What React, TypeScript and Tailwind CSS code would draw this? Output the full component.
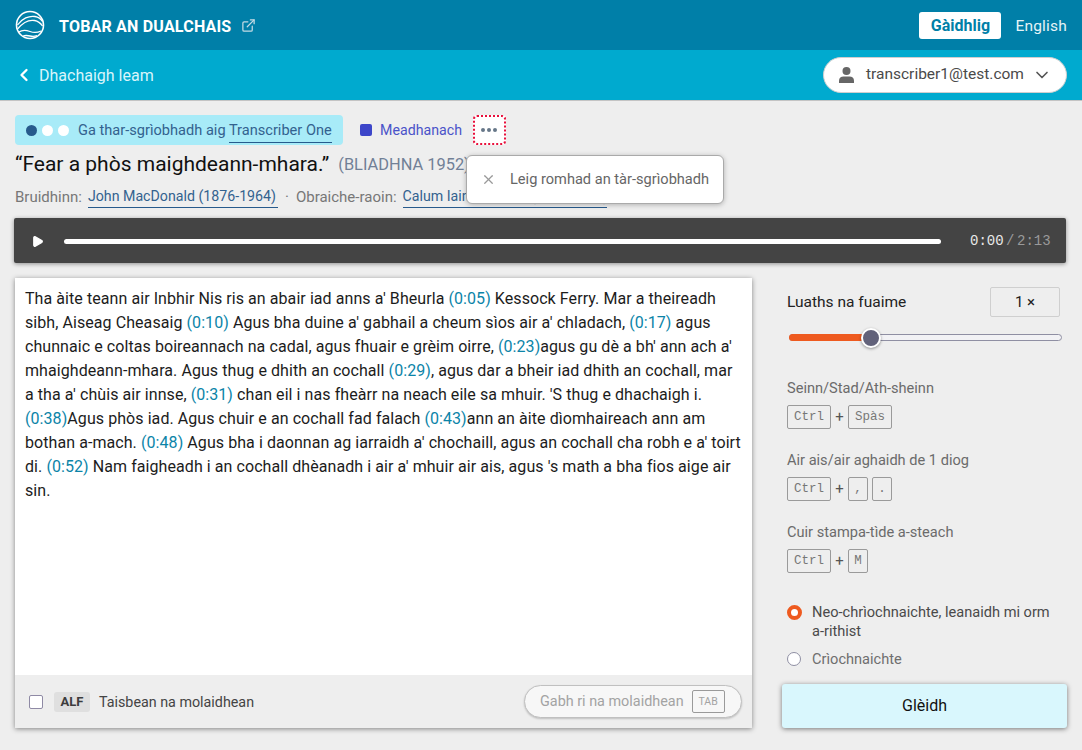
import React from "react";
import { ChevronDown, ChevronLeft, ExternalLink, Play, X } from "lucide-react";

const Stamp = ({ children }: { children: React.ReactNode }) => (
  <span className="text-[#0b84a8]">{children}</span>
);

const Key = ({ children, wide }: { children: React.ReactNode; wide?: boolean }) => (
  <span
    className={`flex h-[24px] items-center justify-center rounded-[2px] border border-[#9a9a9a] font-['Liberation_Mono',monospace] text-[12.5px] text-[#777] ${
      wide ? "w-[44px]" : "w-[20px]"
    }`}
  >
    {children}
  </span>
);

const Plus = () => <span className="w-[17px] text-center text-[15px] leading-[20px] text-[#555]">+</span>;

const Shortcut = ({ label, children }: { label: string; children: React.ReactNode }) => (
  <div className="flex flex-col gap-[7px]">
    <div className="text-[14.600px] leading-[20px] text-[#6b6b6b]">{label}</div>
    <div className="flex items-center">{children}</div>
  </div>
);

const Logo = () => (
  <svg width="30" height="30" viewBox="0 0 30 30" fill="none" stroke="white">
    <circle cx="15" cy="15" r="13.5" strokeWidth="1.6" />
    <path d="M2.5 15C7 8.5 14 5.5 20 6.500c3.500.6 6 2.500 7.500 5" strokeWidth="1.3" />
    <path d="M2.500 19c5-6 11-9.500 17-8.500 3.500.6 6 2.500 8 5.500" strokeWidth="1.3" />
    <path d="M4 22c3.500-2.500 7-2 11-.5s7 1.500 11-.5" strokeWidth="1.3" />
    <path d="M8 26c3-1 5-.5 7 0s5 .5 7-.5" strokeWidth="1.3" />
  </svg>
);

const UserIcon = () => (
  <svg width="15" height="16" viewBox="0 0 15 16" fill="#666" className="shrink-0">
    <circle cx="7.5" cy="4" r="4" />
    <path d="M0 16v-2.500C0 11 2 9.500 4.500 9.500h6c2.500 0 4.500 1.500 4.500 4V16z" />
  </svg>
);

const App = () => {
  return (
    <div className="flex h-[750px] w-[1082px] flex-col overflow-hidden bg-[#eeeeee] font-['Roboto',sans-serif]">
      <header className="flex h-[50px] shrink-0 items-center justify-between bg-[#007fa8] pl-[15px] pr-[15px]">
        <div className="flex items-center">
          <Logo />
          <span className="ml-[14px] pt-[3px] text-[16px] font-bold tracking-[0.2px] text-white">TOBAR AN DUALCHAIS</span>
          <ExternalLink className="ml-[10px] mt-[1px] h-[15px] w-[15px] text-[#c4dbe4]" strokeWidth={2} />
        </div>
        <div className="flex items-center gap-[14px]">
          <span className="flex h-[27px] w-[82px] items-center justify-center rounded-[3px] bg-white pt-[1px] text-[16px] font-bold text-[#007fa8]">
            Gàidhlig
          </span>
          <span className="pt-[3px] text-[15.500px] tracking-[0.2px] text-[#e6f3f7]">English</span>
        </div>
      </header>

      <div className="flex h-[51px] shrink-0 items-center justify-between border-b border-[#c4c4c4] bg-[#00aacf] pl-[14px] pr-[15px]">
        <div className="flex items-center text-[#d9f5fb]">
          <ChevronLeft className="h-[20px] w-[20px] text-white" strokeWidth={2.8} />
          <span className="ml-[5px] pt-[1px] text-[16px]">Dhachaigh leam</span>
        </div>
        <button className="flex h-[36px] w-[244px] items-center rounded-full border border-[#cfcfcf] bg-white pl-[15px] pr-[14px] text-[#4a4a4a]">
          <UserIcon />
          <span className="ml-[12px] text-[15.500px]">transcriber1@test.com</span>
          <ChevronDown className="ml-auto h-[20px] w-[20px] text-[#555]" strokeWidth={2} />
        </button>
      </div>

      <div className="relative px-[15px]">
        <div className="mt-[14px] flex h-[30px] items-center">
          <div className="flex h-[30px] w-[328px] items-center rounded-[4px] bg-[#a8ebf8] pl-[11px]">
            <span className="h-[11px] w-[11px] rounded-full bg-[#275a8c]" />
            <span className="ml-[5px] h-[11px] w-[11px] rounded-full bg-white" />
            <span className="ml-[5px] h-[11px] w-[11px] rounded-full bg-white" />
            <span className="ml-[9px] whitespace-nowrap pt-[1px] text-[14.600px] text-[#33628f]">
              Ga thar-sgrìobhadh aig{" "}
              <span className="border-b border-[#275a8c] pb-[3px]">Transcriber One</span>
            </span>
          </div>
          <span className="ml-[17px] h-[12px] w-[12px] rounded-[2px] bg-[#3d46c9]" />
          <span className="ml-[8px] pt-[1px] text-[14.200px] text-[#4a53c9]">Meadhanach</span>
          <button className="ml-[11px] flex h-[30px] w-[33px] items-center justify-center gap-[2px] rounded-[4px] border-2 border-dotted border-[#e8103c] bg-white">
            <span className="h-[4px] w-[4px] rounded-full bg-[#667788]" />
            <span className="h-[4px] w-[4px] rounded-full bg-[#667788]" />
            <span className="h-[4px] w-[4px] rounded-full bg-[#667788]" />
          </button>
        </div>

        <div className="mt-[6px] flex h-[28px] items-center whitespace-nowrap">
          <span className="text-[21px] text-[#111]">“Fear a phòs maighdeann-mhara.”</span>
          <span className="ml-[9px] text-[16.400px] text-[#718096]">(BLIADHNA 1952)</span>
        </div>

        <div className="mt-[7px] flex h-[22px] items-center whitespace-nowrap text-[15px] text-[#777]">
          <span>Bruidhinn:</span>
          <span className="ml-[6px] w-[190px] border-b border-[#275a8c] pb-[1px] text-[14.200px] leading-[20px] text-[#33628f]">
            John MacDonald (1876-1964)
          </span>
          <span className="ml-[6px] w-[6px] text-center">·</span>
          <span className="ml-[6px]">Obraiche-raoin:</span>
          <span className="ml-[6px] w-[204px] border-b border-[#275a8c] pb-[1px] text-[14.200px] leading-[20px] text-[#33628f]">
            Calum Iain Maclean (1915-1960)
          </span>
        </div>

        <div className="absolute left-[466px] top-[54px] flex h-[49px] w-[258px] items-center rounded-[6px] border border-[#aaaaaa] bg-white shadow-[0_1px_5px_rgba(0,0,0,0.25)]">
          <X className="ml-[14px] h-[15px] w-[15px] text-[#999]" strokeWidth={2} />
          <span className="ml-[14px] whitespace-nowrap text-[14.600px] text-[#666]">Leig romhad an tàr-sgrìobhadh</span>
        </div>
      </div>

      <div className="ml-[14px] mr-[16px] mt-[10px] flex h-[45px] shrink-0 items-center rounded-[2px] bg-[#444444] pt-[2px] shadow-[0_1px_4px_rgba(0,0,0,0.4)]">
        <Play className="ml-[17px] h-[13px] w-[13px] fill-white text-white" />
        <div className="ml-[20px] h-[5px] w-[877px] rounded-full bg-white" />
        <div className="ml-[29px] whitespace-nowrap font-['Liberation_Mono',monospace] text-[14px] text-[#e8e8e8]">
          0:00<span className="mx-[2.500px] text-[#9a9a9a]">/</span>
          <span className="text-[#9a9a9a]">2:13</span>
        </div>
      </div>

      <div className="mt-[15px] flex min-h-0 flex-1 pl-[15px] pr-[15px]">
        <div className="flex h-[450px] w-[737px] flex-col bg-white shadow-[0_1px_5px_rgba(0,0,0,0.45)]">
          <div className="flex-1 pl-[10px] pr-[8px] pt-[9px] text-[16px] leading-[24px] tracking-[0.07px] text-[#1c1c1c]">
            Tha àite teann air Inbhir Nis ris an abair iad anns a' Bheurla <Stamp>(0:05)</Stamp> Kessock Ferry. Mar a
            theireadh
            <br />
            sibh, Aiseag Cheasaig <Stamp>(0:10)</Stamp> Agus bha duine a' gabhail a cheum sìos air a' chladach,{" "}
            <Stamp>(0:17)</Stamp> agus
            <br />
            chunnaic e coltas boireannach na cadal, agus fhuair e grèim oirre, <Stamp>(0:23)</Stamp>agus gu dè a bh' ann
            ach a'
            <br />
            mhaighdeann-mhara. Agus thug e dhith an cochall <Stamp>(0:29)</Stamp>, agus dar a bheir iad dhith an cochall,
            mar
            <br />
            a tha a' chùis air innse, <Stamp>(0:31)</Stamp> chan eil i nas fheàrr na neach eile sa mhuir. 'S thug e
            dhachaigh i.
            <br />
            <Stamp>(0:38)</Stamp>Agus phòs iad. Agus chuir e an cochall fad falach <Stamp>(0:43)</Stamp>ann an àite
            dìomhaireach ann am
            <br />
            bothan a-mach. <Stamp>(0:48)</Stamp> Agus bha i daonnan ag iarraidh a' chochaill, agus an cochall cha robh e
            a' toirt
            <br />
            di. <Stamp>(0:52)</Stamp> Nam faigheadh i an cochall dhèanadh i air a' mhuir air ais, agus 's math a bha fios
            aige air
            <br />
            sin.
          </div>
          <div className="flex h-[53px] shrink-0 items-center bg-[#eeeeee] pl-[14px] pr-[10px]">
            <span className="h-[14px] w-[14px] rounded-[2px] border border-[#8f8aa5] bg-white" />
            <span className="ml-[11px] flex h-[20px] w-[36px] items-center justify-center rounded-[3px] bg-[#dfdfdf] text-[13px] font-bold text-[#3c3c3c]">
              ALF
            </span>
            <span className="ml-[9px] pt-[2px] text-[14.300px] text-[#444]">Taisbean na molaidhean</span>
            <div className="ml-auto flex h-[33px] w-[218px] items-center rounded-full border border-[#c0c0c0] bg-[#f7f7f7] pl-[15px] shadow-[0_1px_2px_rgba(0,0,0,0.2)]">
              <span className="pt-[1px] text-[14.400px] text-[#a3a3a3]">Gabh ri na molaidhean</span>
              <span className="ml-[8px] flex h-[23px] w-[33px] items-center justify-center rounded-[2px] border border-[#9a9a9a] text-[10.500px] text-[#a3a3a3]">
                TAB
              </span>
            </div>
          </div>
        </div>

        <aside className="ml-[30px] flex h-[450px] w-[285px] flex-col">
          <div className="flex items-center justify-between pl-[5px] pr-[7px] pt-[9px]">
            <span className="pt-[2px] text-[15.500px] text-[#222]">Luaths na fuaime</span>
            <span className="flex h-[30px] w-[70px] items-center justify-center rounded-[2px] border border-[#cfcfcf] text-[15px] text-[#222]">
              1 ×
            </span>
          </div>
          <div className="relative ml-[7px] mr-[5px] mt-[17px] h-[7px] rounded-full border border-[#8f8fa3] bg-[#f2f2f5]">
            <div className="-mx-px -my-px h-[7px] w-[76px] rounded-l-full bg-[#ee5a1f]" />
            <span className="absolute left-[71px] top-[-7px] h-[20px] w-[20px] rounded-full border-2 border-white bg-[#62627a] shadow-[0_1px_3px_rgba(0,0,0,0.4)]" />
          </div>

          <div className="mt-[37px] flex flex-col gap-[21px] pl-[5px]">
            <Shortcut label="Seinn/Stad/Ath-sheinn">
              <Key wide>Ctrl</Key>
              <Plus />
              <Key wide>Spàs</Key>
            </Shortcut>
            <Shortcut label="Air ais/air aghaidh de 1 diog">
              <Key wide>Ctrl</Key>
              <Plus />
              <Key>,</Key>
              <span className="w-[4px]" />
              <Key>.</Key>
            </Shortcut>
            <Shortcut label="Cuir stampa-tìde a-steach">
              <Key wide>Ctrl</Key>
              <Plus />
              <Key>M</Key>
            </Shortcut>
          </div>

          <div className="mt-[30px] flex items-start pl-[5px]">
            <span className="mt-[2px] h-[15px] w-[15px] shrink-0 rounded-full border-[4px] border-[#ee5a1f] bg-white" />
            <span className="ml-[10px] text-[14.600px] leading-[19px] text-[#4a4a4a]">
              Neo-chrìochnaichte, leanaidh mi orm
              <br />
              a-rithist
            </span>
          </div>
          <div className="mt-[9px] flex items-center pl-[5px]">
            <span className="h-[14px] w-[14px] shrink-0 rounded-full border border-[#8f8fa3] bg-white" />
            <span className="ml-[11px] text-[14.600px] leading-[18px] text-[#6f6f6f]">Crìochnaichte</span>
          </div>
          <button className="mt-auto flex h-[44px] items-center justify-center rounded-[3px] bg-[#d9f7fd] text-[16px] text-[#111] shadow-[0_1px_5px_rgba(0,0,0,0.5)]">
            Glèidh
          </button>
        </aside>
      </div>
    </div>
  );
};

export default App;
